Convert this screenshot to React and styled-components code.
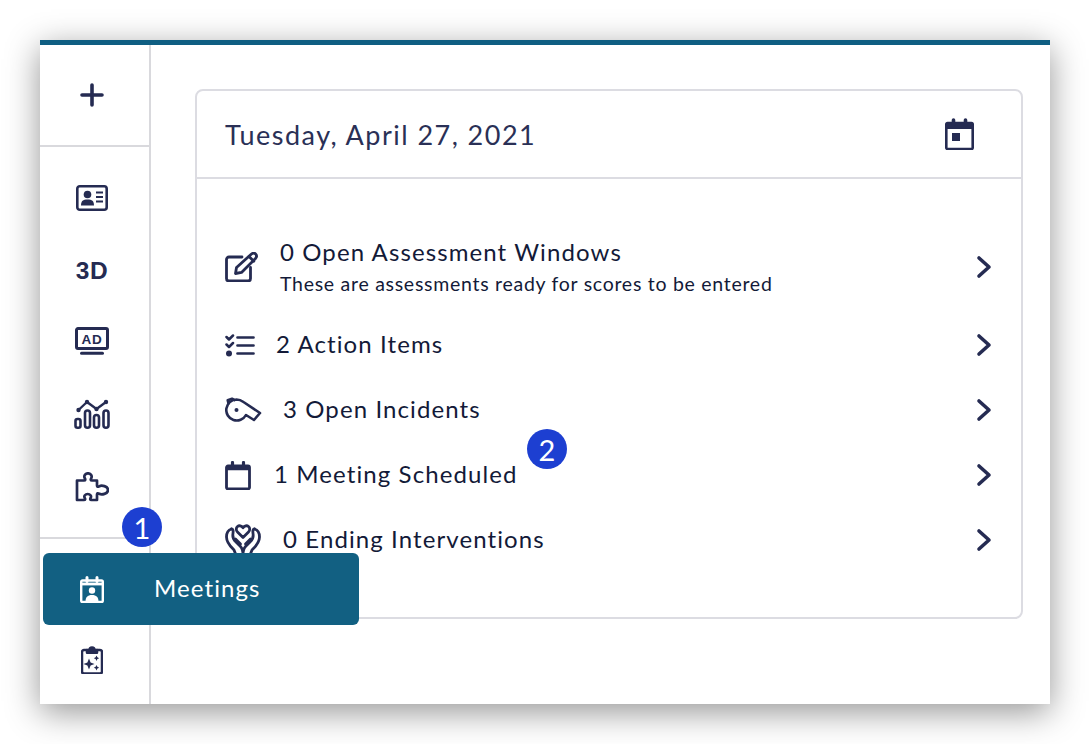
import React from 'react';
import styled, { createGlobalStyle } from 'styled-components';

const GlobalStyle = createGlobalStyle`
  html, body { margin: 0; padding: 0; background: #fff; }
  body { font-family: "Lato", "Open Sans", sans-serif; }
`;

const NAVY = '#252b52';

const Page = styled.div`
  width: 1090px;
  height: 744px;
  padding: 40px;
  box-sizing: border-box;
  overflow: hidden;
`;

const Shell = styled.div`
  position: relative;
  width: 1010px;
  height: 664px;
  background: #fff;
  border-top: 5px solid #0f5e82;
  box-sizing: border-box;
  box-shadow: 0 8px 32px rgba(0, 0, 0, 0.42);
  display: flex;
`;

const Sidebar = styled.nav`
  width: 109px;
  flex-shrink: 0;
  border-right: 2px solid #d9d9dd;
  display: flex;
  flex-direction: column;
`;

const AddCell = styled.div`
  height: 100px;
  border-bottom: 2px solid #d9d9dd;
  padding-right: 7px;
  display: flex;
  align-items: center;
  justify-content: center;
  margin-right: -2px;
  color: ${NAVY};
`;

const NavGroup = styled.div`
  padding-top: 13px;
  height: 392px;
  box-sizing: border-box;
  border-bottom: 2px solid #d9d9dd;
  margin-right: -2px;
`;

const NavItem = styled.div`
  height: ${(p) => p.$h}px;
  padding-right: 7px;
  display: flex;
  align-items: center;
  justify-content: center;
  color: ${NAVY};
`;

const ToolItem = styled(NavItem)`
  padding-right: 5px;
`;

const ThreeD = styled.span`
  font-family: "Liberation Sans", Arial, sans-serif;
  font-weight: 700;
  font-size: 24.5px;
  letter-spacing: 0.5px;
  padding-top: 1px;
  color: ${NAVY};
`;

const Content = styled.main`
  flex: 1;
  padding: 44px 27px 0 44px;
`;

const Card = styled.section`
  height: 530px;
  box-sizing: border-box;
  border: 2px solid #dcdce2;
  border-radius: 8px;
`;

const CardHeader = styled.header`
  height: 88px;
  box-sizing: border-box;
  border-bottom: 2px solid #dcdce2;
  padding: 0 47px 0 28px;
  display: flex;
  align-items: center;
  justify-content: space-between;
  color: ${NAVY};
`;

const DateText = styled.h1`
  margin: 0;
  font-size: 27px;
  font-weight: 400;
  letter-spacing: 1.47px;
  color: #2a3056;
`;

const List = styled.div`
  padding: 55px 29px 0 28px;
  display: flex;
  flex-direction: column;
  gap: 25px;
`;

const Row = styled.div`
  height: ${(p) => p.$h || 40}px;
  display: flex;
  align-items: center;
  color: ${NAVY};
`;

const RowIcon = styled.div`
  width: 34px;
  flex-shrink: 0;
  display: flex;
  align-items: center;

  svg {
    flex-shrink: 0;
  }
`;

const RowText = styled.div`
  flex: 1;
  padding-left: ${(p) => p.$indent}px;
  padding-bottom: ${(p) => p.$lift || 0}px;
  color: #131a38;
`;

const Title = styled.div`
  font-size: 24px;
  letter-spacing: 1.1px;
  line-height: 30px;
`;

const Sub = styled.div`
  font-size: 19.5px;
  letter-spacing: 0.72px;
  line-height: 26px;
  margin-top: 4px;
`;

const Tooltip = styled.div`
  position: absolute;
  left: 3px;
  top: 508px;
  width: 316px;
  height: 72px;
  border-radius: 6px;
  background: #126082;
  color: #fff;
  display: flex;
  align-items: center;
`;

const TooltipIcon = styled.div`
  width: 111px;
  padding-left: 37px;
  box-sizing: border-box;
  display: flex;
  align-items: center;
`;

const TooltipLabel = styled.span`
  font-size: 24px;
  letter-spacing: 1.1px;
  padding-bottom: 3px;
`;

const Badge = styled.div`
  position: absolute;
  left: ${(p) => p.$x}px;
  top: ${(p) => p.$y}px;
  width: 40px;
  height: 40px;
  border-radius: 50%;
  background: #1d3fd1;
  color: #fff;
  font-size: 29px;
  display: flex;
  align-items: center;
  justify-content: center;
`;

function Icon({ w = 24, h = 24, sw = 2, children }) {
  return (
    <svg width={w} height={h} viewBox={`0 0 ${w} ${h}`} fill="none" stroke="currentColor"
      strokeWidth={sw} strokeLinecap="round" strokeLinejoin="round">
      {children}
    </svg>
  );
}

const PlusIcon = () => (
  <Icon w={24} h={24} sw={3.6}><path d="M12 2v20M2 12h20" /></Icon>
);

const IdCardIcon = () => (
  <Icon w={32} h={26} sw={2.6}>
    <rect x="1.3" y="1.3" width="29.4" height="23.4" rx="2.5" />
    <circle cx="11.5" cy="9.500" r="3.800" fill="currentColor" stroke="none" />
    <path d="M5 20.500c0-4.500 2-6 6.500-6s6.500 1.500 6.500 6z" fill="currentColor" stroke="none" />
    <path d="M20 7.500h7M20 12h7M20 16.500h7" strokeWidth="2" strokeLinecap="butt" />
  </Icon>
);

const AdIcon = () => (
  <Icon w={34} h={28} sw={3}>
    <path d="M3 1.500h28a1.500 1.500 0 0 1 1.500 1.500v17a1.500 1.500 0 0 1-1.500 1.500h-28a1.500 1.500 0 0 1-1.500-1.500v-17a1.500 1.500 0 0 1 1.500-1.500z" />
    <path d="M6.500 26.300h21" />
    <text x="17" y="17" textAnchor="middle" fontFamily="Liberation Sans, sans-serif" fontWeight="700"
      fontSize="13.500" letterSpacing="0.8" fill="currentColor" stroke="none">AD</text>
  </Icon>
);

const ChartIcon = () => (
  <Icon w={36} h={30} sw={2.6}>
    <path d="M4.500 11l8.500-8 9.500 7 9.500-7" strokeWidth="2.400" />
    <circle cx="4.500" cy="11" r="2.200" fill="currentColor" stroke="none" />
    <circle cx="13" cy="3" r="2.200" fill="currentColor" stroke="none" />
    <circle cx="22.500" cy="10" r="2.200" fill="currentColor" stroke="none" />
    <circle cx="32" cy="3" r="2.200" fill="currentColor" stroke="none" />
    <rect x="1.500" y="20" width="5" height="8.700" rx="2" />
    <rect x="11" y="11.500" width="5" height="17.200" rx="2.500" />
    <rect x="20" y="16" width="5" height="12.700" rx="2.500" />
    <rect x="29.500" y="11.500" width="5" height="17.200" rx="2.500" />
  </Icon>
);

const PuzzleIcon = () => (
  <Icon w={34} h={30} sw={2.7}>
    <path d="M2 8.500h7c1.500 0 1.500-1 .8-2.200-1.300-2.300.3-5 3.200-5s4.500 2.700 3.200 5c-.7 1.200-.7 2.200.8 2.200h5v5c0 1.500 1 1.500 2.200.8 2.300-1.300 8.800-.3 8.800 3.700s-6.500 5-8.800 3.700c-1.200-.7-2.200-.7-2.200.8v5.500h-5.500c-1.500 0-1.500-1-.8-2.200 1-1.800-.5-3.800-3-3.800s-4 2-3 3.800c.7 1.200.7 2.200-.8 2.200h-6.900z" />
  </Icon>
);

const MeetingIcon = () => (
  <Icon w={24} h={27} sw={2.4}>
    <path d="M2.500 4.500h19a1.300 1.300 0 0 1 1.300 1.300v18.900a1.300 1.300 0 0 1-1.300 1.300h-19a1.300 1.300 0 0 1-1.300-1.300v-18.900a1.300 1.300 0 0 1 1.300-1.300z" />
    <path d="M7 1.500v4M17 1.500v4" strokeWidth="3" />
    <path d="M2 8h20" strokeWidth="2.800" strokeLinecap="butt" />
    <circle cx="12" cy="14.500" r="3.200" fill="currentColor" stroke="none" />
    <path d="M5.500 26c0-5 2-7 6.500-7s6.500 2 6.500 7z" fill="currentColor" stroke="none" />
  </Icon>
);

const ClipboardIcon = () => (
  <Icon w={22} h={28} sw={2.5}>
    <path d="M6 4h-3a2 2 0 0 0-2 2v19.500a2 2 0 0 0 2 2h16a2 2 0 0 0 2-2v-19.500a2 2 0 0 0-2-2h-3" />
    <path d="M6 6.800v-2.800h2.500a2.500 2.500 0 0 1 5 0h2.500v2.800z" fill="currentColor" />
    <path d="M8 12.500l1.600 3.900 3.900 1.600-3.900 1.600-1.600 3.900-1.600-3.900-3.900-1.600 3.900-1.600z" fill="currentColor" stroke="none" />
    <path d="M15.500 9.500l.9 1.800 1.800.9-1.800.9-.9 1.800-.9-1.800-1.800-.9 1.800-.9z" fill="currentColor" stroke="none" />
    <path d="M15.500 19l.9 1.800 1.800.9-1.800.9-.9 1.800-.9-1.800-1.800-.9 1.800-.9z" fill="currentColor" stroke="none" />
  </Icon>
);

const DateIcon = () => (
  <Icon w={29} h={32} sw={2.6}>
    <path d="M2.500 5h24a1.200 1.200 0 0 1 1.200 1.200v23.600a1.200 1.200 0 0 1-1.200 1.200h-24a1.200 1.200 0 0 1-1.200-1.200v-23.600a1.200 1.200 0 0 1 1.200-1.200z" />
    <path d="M2 8h25" strokeWidth="6" strokeLinecap="butt" />
    <path d="M8.500 2v5M20.500 2v5" strokeWidth="3.600" />
    <rect x="7" y="15" width="8" height="8" fill="currentColor" stroke="none" />
  </Icon>
);

const EditIcon = () => (
  <Icon w={34} h={30} sw={2.8}>
    <path d="M17 5h-13a2.500 2.500 0 0 0-2.500 2.500v19a2.500 2.500 0 0 0 2.500 2.500h19a2.500 2.500 0 0 0 2.500-2.500v-11" />
    <path d="M10.500 21.500l1-6 15-13.500c1.500-1.200 3.200-1 4.200.2s1 3-.2 4.200l-14 14z" />
    <path d="M24 4.500l4.800 4.800" />
  </Icon>
);

const ChecklistIcon = () => (
  <Icon w={30} h={23} sw={2.5}>
    <path d="M1.500 3l2.500 2.500 4-4M1.500 10.500l2.500 2.500 4-4" />
    <circle cx="4" cy="19.500" r="3" fill="currentColor" stroke="none" />
    <path d="M12.500 3.500h16M12.500 11.500h16M12.500 19.500h16" strokeWidth="2.700" />
  </Icon>
);

const WhistleIcon = () => (
  <Icon w={37} h={26} sw={2.6}>
    <path d="M3.500 6.500l-.8-3.300 4.300-1.500 2.500 1.500" />
    <path d="M11.500 2.500c3 0 5 1 7 2.500l16.500 11-6 7-8-5a10.500 10.500 0 1 1-9.500-15.500z" />
    <circle cx="11.500" cy="13" r="2" fill="currentColor" stroke="none" />
  </Icon>
);

const CalendarIcon = () => (
  <Icon w={26} h={29} sw={2.8}>
    <path d="M3 5h20a1.500 1.500 0 0 1 1.500 1.500v20a1.500 1.500 0 0 1-1.500 1.500h-20a1.500 1.500 0 0 1-1.500-1.500v-20a1.500 1.500 0 0 1 1.500-1.500z" />
    <path d="M2 7.500h22" strokeWidth="3.500" strokeLinecap="butt" />
    <path d="M7.500 1.500v5M18.500 1.500v5" strokeWidth="3.200" />
  </Icon>
);

const HandsIcon = () => (
  <Icon w={36} h={34} sw={2.8}>
    <path d="M18 14.500l-5.500-5.500c-1.700-1.700-1.500-4.200 0-5.500 1.500-1.200 4-1 5.500 1.300 1.500-2.300 4-2.500 5.500-1.300 1.500 1.300 1.700 3.800 0 5.500z" />
    <path d="M6.500 6c-3.500 1-5 4-5 8 0 6 4.500 10 7.500 13l2 5M29.500 6c3.500 1 5 4 5 8 0 6-4.500 10-7.500 13l-2 5" />
    <path d="M6.500 6c2.500 0 1.500 3.500 1.300 6-.2 3 1 5 3.200 7l4.500 4.500c2 2 2.500 4 2.500 8.500M29.500 6c-2.500 0-1.500 3.500-1.300 6 .2 3-1 5-3.200 7l-4.500 4.500c-2 2-2.500 4-2.500 8.500" />
    <path d="M10.500 16l5 5M25.500 16l-5 5" />
  </Icon>
);

const Chevron = () => (
  <Icon w={16} h={24} sw={3.6}><path d="M3 3l10 9-10 9" /></Icon>
);

const rows = [
  { icon: <ChecklistIcon />, title: '2 Action Items', indent: 17 },
  { icon: <WhistleIcon />, title: '3 Open Incidents', indent: 24 },
  { icon: <CalendarIcon />, title: '1 Meeting Scheduled', indent: 15 },
  { icon: <HandsIcon />, title: '0 Ending Interventions', indent: 24 },
];

export default function App() {
  return (
    <Page>
      <GlobalStyle />
      <Shell>
        <Sidebar>
          <AddCell><PlusIcon /></AddCell>
          <NavGroup>
            <NavItem $h={76}><IdCardIcon /></NavItem>
            <NavItem $h={68}><ThreeD>3D</ThreeD></NavItem>
            <NavItem $h={74}><AdIcon /></NavItem>
            <NavItem $h={72}><ChartIcon /></NavItem>
            <NavItem $h={74}><PuzzleIcon /></NavItem>
          </NavGroup>
          <ToolItem $h={86} />
          <ToolItem $h={70}><ClipboardIcon /></ToolItem>
        </Sidebar>
        <Content>
          <Card>
            <CardHeader>
              <DateText>Tuesday, April 27, 2021</DateText>
              <DateIcon />
            </CardHeader>
            <List>
              <Row $h={66}>
                <RowIcon><EditIcon /></RowIcon>
                <RowText $indent={21}>
                  <Title>0 Open Assessment Windows</Title>
                  <Sub>These are assessments ready for scores to be entered</Sub>
                </RowText>
                <Chevron />
              </Row>
              {rows.map((r) => (
                <Row key={r.title}>
                  <RowIcon>{r.icon}</RowIcon>
                  <RowText $indent={r.indent} $lift={2}><Title>{r.title}</Title></RowText>
                  <Chevron />
                </Row>
              ))}
            </List>
          </Card>
        </Content>
        <Tooltip>
          <TooltipIcon><MeetingIcon /></TooltipIcon>
          <TooltipLabel>Meetings</TooltipLabel>
        </Tooltip>
        <Badge $x={82} $y={462}>1</Badge>
        <Badge $x={487} $y={384}>2</Badge>
      </Shell>
    </Page>
  );
}
